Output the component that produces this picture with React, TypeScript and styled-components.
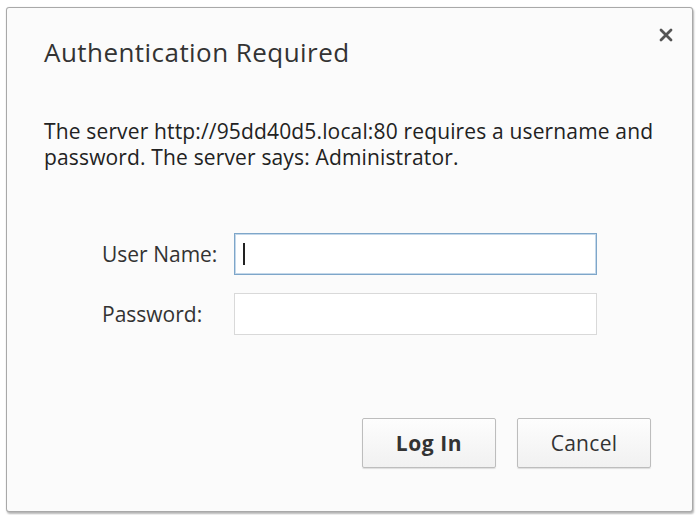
import React from 'react';
import styled, { createGlobalStyle } from 'styled-components';

const GlobalStyle = createGlobalStyle`
  html, body {
    margin: 0;
    padding: 0;
    background: #ffffff;
  }
  body {
    font-family: "Open Sans", "Noto Sans", Arial, sans-serif;
    color: #222;
  }
`;

const Page = styled.div`
  width: 698px;
  height: 515px;
  padding: 7px 0 0 6px;
  box-sizing: border-box;
`;

const Dialog = styled.div`
  position: relative;
  width: 687px;
  height: 505px;
  box-sizing: border-box;
  background: #fbfbfb;
  border: 1px solid #a9a9a9;
  border-radius: 3px;
  box-shadow: 1px 2px 2px rgba(0, 0, 0, 0.28), 0 0 1px rgba(0, 0, 0, 0.2);
  padding: 28px 41px 0 37px;
  display: flex;
  flex-direction: column;
`;

const Title = styled.h1`
  margin: 0;
  font-size: 26px;
  font-weight: 400;
  line-height: 32px;
  color: #333;
  letter-spacing: 0.45px;
`;

const CloseButton = styled.button`
  position: absolute;
  top: 15px;
  right: 14px;
  width: 24px;
  height: 24px;
  padding: 0;
  border: none;
  background: transparent;
  display: flex;
  align-items: center;
  justify-content: center;
  cursor: pointer;
`;

const Message = styled.p`
  margin: 50px -14px 0 0;
  font-size: 21px;
  line-height: 26px;
  color: #222;
  letter-spacing: 0.15px;
`;

const Form = styled.div`
  margin: 63px 0 0 58px;
  display: grid;
  grid-template-columns: 116px 363px;
  justify-content: start;
  column-gap: 16px;
  row-gap: 18px;
  align-items: center;
`;

const Label = styled.label`
  font-size: 21px;
  color: #333;
  letter-spacing: 0px;
  white-space: nowrap;
`;

const Field = styled.input<{ $focused?: boolean }>`
  height: 42px;
  box-sizing: border-box;
  border: 1px solid ${p => (p.$focused ? '#7ea6c9' : '#d9d9d9')};
  box-shadow: ${p => (p.$focused ? 'inset 0 0 0 1px #c4d8ea' : 'none')};
  background: #fff;
  padding: 0 10px;
  font-size: 20px;
  outline: none;
  font-family: inherit;
`;

const Caret = styled.span`
  position: absolute;
  left: 9px;
  top: 10px;
  width: 2px;
  height: 22px;
  background: #222;
`;

const FieldWrap = styled.div`
  position: relative;
  display: flex;
  flex-direction: column;
`;

const Actions = styled.div`
  margin-top: auto;
  margin-bottom: 43px;
  display: flex;
  justify-content: flex-end;
  gap: 21px;
`;

const Button = styled.button<{ $primary?: boolean }>`
  width: 134px;
  height: 50px;
  box-sizing: border-box;
  border: 1px solid #bdbdbd;
  border-radius: 2px;
  background: linear-gradient(#fdfdfd, #f1f1f1);
  box-shadow: 0 1px 1px rgba(0, 0, 0, 0.12);
  font-family: inherit;
  font-size: 21px;
  font-weight: ${p => (p.$primary ? 700 : 400)};
  color: #333;
  letter-spacing: ${p => (p.$primary ? '0.6px' : '0.3px')};
  cursor: pointer;
`;

export default function App() {
  return (
    <>
      <GlobalStyle />
      <Page>
        <Dialog>
          <Title>Authentication Required</Title>
          <CloseButton aria-label="Close">
            <svg width="14" height="14" viewBox="0 0 14 14">
              <path d="M2 2 L12 12 M12 2 L2 12" stroke="#555" strokeWidth="2.8" strokeLinecap="round" />
            </svg>
          </CloseButton>
          <Message>
            The server http://95dd40d5.local:80 requires a username and password. The server says: Administrator.
          </Message>
          <Form>
            <Label>User Name:</Label>
            <FieldWrap>
              <Field $focused type="text" />
              <Caret />
            </FieldWrap>
            <Label>Password:</Label>
            <FieldWrap>
              <Field type="password" />
            </FieldWrap>
          </Form>
          <Actions>
            <Button $primary>Log In</Button>
            <Button>Cancel</Button>
          </Actions>
        </Dialog>
      </Page>
    </>
  );
}
